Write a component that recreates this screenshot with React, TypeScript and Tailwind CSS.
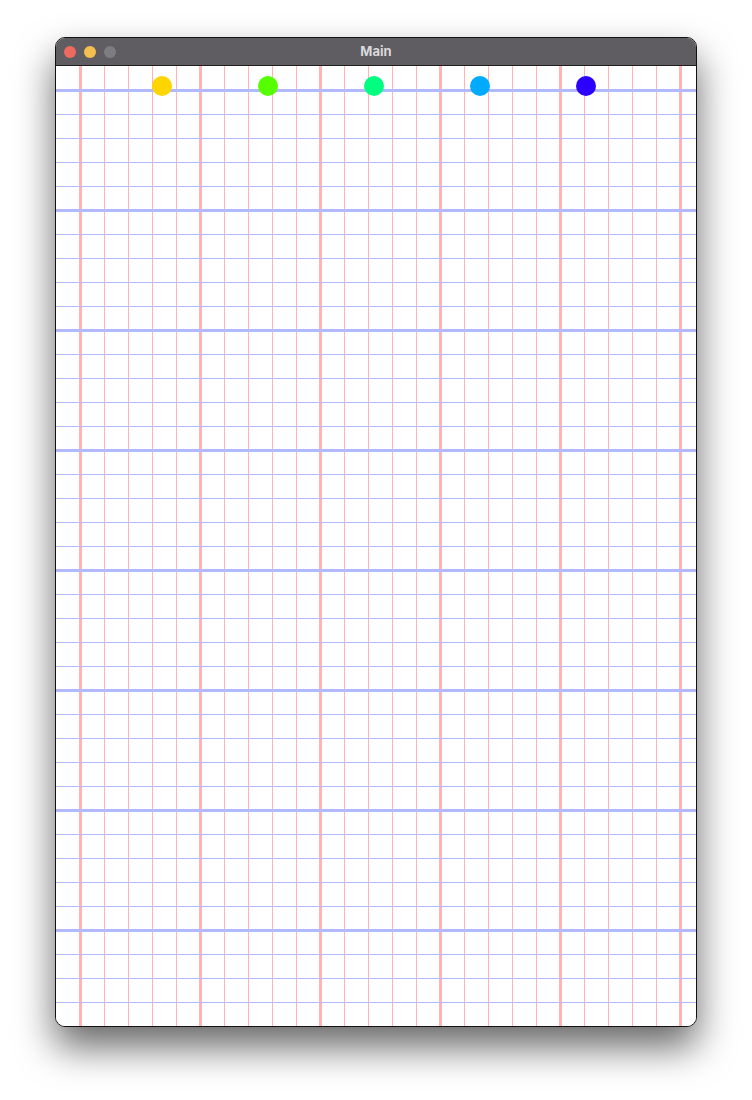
import React from 'react';

const W = 640;
const H = 960;
const STEP = 24;
const DOTS = ['#ffd500', '#55ff00', '#00ff80', '#00aaff', '#2b00ff'];

function GridCanvas() {
  const cols = [];
  for (let i = 1; i * STEP < W; i++) {
    const x = i * STEP;
    const thick = (i - 1) % 5 === 0;
    cols.push(
      <rect key={`v${i}`} x={thick ? x - 1 : x} y={0} width={thick ? 3 : 1} height={H} fill="#ffb3b3" />
    );
  }
  const rows = [];
  for (let j = 1; j * STEP < H; j++) {
    const y = j * STEP;
    const thick = (j - 1) % 5 === 0;
    rows.push(
      <rect key={`h${j}`} x={0} y={thick ? y - 1 : y} width={W} height={thick ? 3 : 1} fill="#b3b9ff" />
    );
  }

  return (
    <svg width={W} height={H} viewBox={`0 0 ${W} ${H}`} className="block">
      <rect width={W} height={H} fill="#ffffff" />
      {cols}
      {rows}
      {DOTS.map((c, i) => (
        <circle key={c} cx={106 * (i + 1)} cy={20} r={10} fill={c} />
      ))}
    </svg>
  );
}

export default function App() {
  return (
    <div className="w-[752px] h-[1100px] bg-white pt-[37px] pl-[55px]">
      <div className="w-[642px] rounded-[10px] border border-[#111] overflow-hidden bg-white shadow-[0_20px_38px_rgba(0,0,0,0.6)]">
        {/* title bar */}
        <div className="relative h-[28px] bg-[#5f5d62] border-b border-[#1f1f1f] flex items-center">
          <div className="flex items-center gap-2 pl-[8px]">
            <span className="w-3 h-3 rounded-full bg-[#ee6a5f]" />
            <span className="w-3 h-3 rounded-full bg-[#f5bf4f]" />
            <span className="w-3 h-3 rounded-full bg-[#7d7c80]" />
          </div>
          <div className="absolute inset-0 flex items-center justify-center text-[13px] font-bold text-[#d9d8db] font-['Inter',sans-serif]">
            Main
          </div>
        </div>
        <GridCanvas />
      </div>
    </div>
  );
}
